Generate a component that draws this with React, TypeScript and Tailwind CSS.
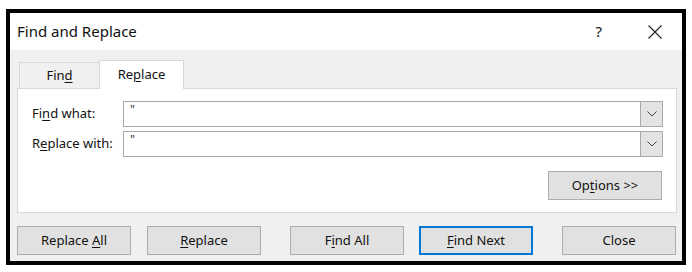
import { ReactNode } from "react";

const font = { fontFamily: '"Noto Sans", "Open Sans", Arial, sans-serif' };

// underline one letter as an access key
const Key = ({ children }: { children: ReactNode }) => (
  <span className="underline underline-offset-2 decoration-1">{children}</span>
);

const Chevron = () => (
  <svg width="10" height="6" viewBox="0 0 10 6" fill="none">
    <path d="M0.5 0.5 L5 5 L9.5 0.5" stroke="#444" strokeWidth="1" />
  </svg>
);

const Combo = () => (
  <div className="flex h-[26px] w-[540px] border border-[#a9a9a9] bg-white">
    <div className="flex-1 pl-[6px] pt-[2px] text-[12px] leading-none text-[#333]">"</div>
    <div className="flex w-[22px] items-center justify-center border-l border-[#a9a9a9] bg-[#e3e3e3]">
      <Chevron />
    </div>
  </div>
);

interface BtnProps {
  children: ReactNode;
  className?: string;
  primary?: boolean;
}
const Btn = ({ children, className = "", primary }: BtnProps) => (
  <div
    className={`flex h-[29px] w-[114px] items-center justify-center bg-[#e1e1e1] text-[13px] text-[#111] ${
      primary ? "border-2 border-[#0078d7]" : "border border-[#adadad]"
    } ${className}`}
  >
    {children}
  </div>
);

export default function App() {
  return (
    <div className="h-[272px] w-[692px] bg-white pl-[6px] pt-[9px]" style={font}>
      <div className="flex h-[256px] w-[680px] flex-col border-4 border-black">
        {/* Title bar */}
        <div className="flex h-[37px] items-center bg-white pl-[7px] text-[15px] text-[#111]">
          <span className="flex-1">Find and Replace</span>
          <span className="mr-[46px] text-[15px]">?</span>
          <svg width="14" height="14" viewBox="0 0 14 14" className="mr-[20px]">
            <path d="M0.5 0.5 L13.5 13.5 M13.5 0.5 L0.5 13.5" stroke="#222" strokeWidth="1.1" />
          </svg>
        </div>

        {/* Body */}
        <div className="flex flex-1 flex-col bg-[#f0f0f0] pl-[7px] pr-[5px] pt-[10px]">
          {/* Tabs */}
          <div className="flex h-[28px] items-end text-[13px] text-[#111]">
            <div className="ml-[2px] flex h-[26px] w-[80px] items-center justify-center border-l border-t border-[#d9d9d9] bg-[#f0f0f0]">
              <span>
                Fin<Key>d</Key>
              </span>
            </div>
            <div className="relative -mb-px flex h-[29px] w-[85px] items-center justify-center border border-b-0 border-[#d9d9d9] bg-white">
              <span>
                Re<Key>p</Key>lace
              </span>
            </div>
          </div>

          {/* Panel */}
          <div className="flex h-[125px] flex-col border border-[#d9d9d9] bg-white pl-[14px] pr-[13px] pt-[12px] text-[13px] text-[#111]">
            <div className="flex items-center">
              <span className="w-[91px]">
                Fi<Key>n</Key>d what:
              </span>
              <Combo />
            </div>
            <div className="mt-[4px] flex items-center">
              <span className="w-[91px]">
                R<Key>e</Key>place with:
              </span>
              <Combo />
            </div>
            <div className="mt-[14px] flex justify-end pr-px">
              <Btn>
                <span>
                  Op<Key>t</Key>ions &gt;&gt;
                </span>
              </Btn>
            </div>
          </div>

          {/* Bottom buttons */}
          <div className="mt-[13px] flex">
            <Btn>
              <span>
                Replace <Key>A</Key>ll
              </span>
            </Btn>
            <Btn className="ml-[16px]">
              <span>
                <Key>R</Key>eplace
              </span>
            </Btn>
            <Btn className="ml-[29px]">
              <span>
                F<Key>i</Key>nd All
              </span>
            </Btn>
            <Btn className="ml-[15px]" primary>
              <span>
                <Key>F</Key>ind Next
              </span>
            </Btn>
            <Btn className="ml-[29px]">Close</Btn>
          </div>
        </div>
      </div>
    </div>
  );
}
